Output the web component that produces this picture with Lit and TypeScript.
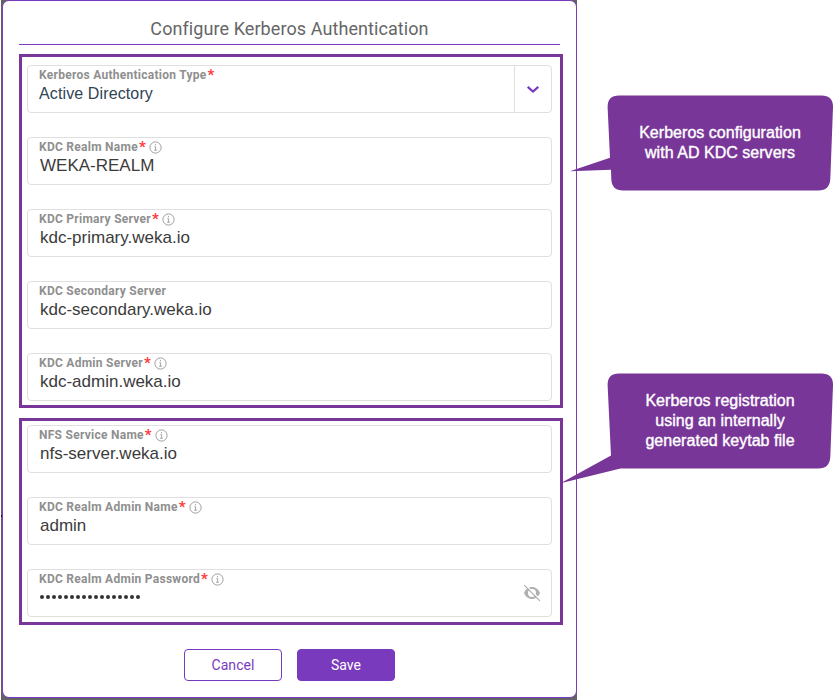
import { LitElement, html, css, svg, nothing } from "lit";
import { customElement, property } from "lit/decorators.js";

const infoIcon = html`<svg class="info" width="13" height="13" viewBox="0 0 13 13" fill="none" stroke="#949494">
  <circle cx="6.5" cy="6.5" r="5.6" stroke-width="0.9" />
  <path d="M5.3 5.6H6.6V9.2M5 9.2H8.1" stroke-width="0.8" />
  <path d="M6 3.7H7" stroke-width="1" />
</svg>`;

const eyeOffIcon = html`<svg class="eye" width="18" height="18" viewBox="0 0 18 18">
  <path fill="#b1b1b1" fill-rule="evenodd"
    d="M1 9C2.400 5.400 5.300 3 9 3s6.600 2.400 8 6c-1.400 3.600-4.300 6-8 6S2.400 12.600 1 9ZM9 5a4 4 0 1 0 0 8a4 4 0 1 0 0-8Z" />
  <path stroke="#fff" stroke-width="1.400" d="M2.300 0.700L17.800 16.200" />
  <path stroke="#a9a9a9" stroke-width="1.100" d="M1.200 1.200L16.800 16.800" />
</svg>`;

@customElement("form-field")
class FormField extends LitElement {
  @property() label = "";
  @property() value = "";
  @property({ type: Boolean }) required = false;
  @property({ type: Boolean }) info = false;
  @property() kind = "text";

  static styles = css`
    :host { display: block; }
    .box {
      box-sizing: border-box; height: 48px; display: flex;
      border: 1px solid #e0e0e0; border-radius: 4px; background: #fff;
    }
    .body { flex: 1; padding: 2px 0 0 11px; min-width: 0; }
    .label {
      display: flex; align-items: flex-start; height: 15px;
      font: 700 12px/15px Roboto, sans-serif; letter-spacing: 0.27px;
      color: #8f8f8f; white-space: pre;
    }
    .star { color: #ff3b3b; font: 700 15px/15px Roboto, sans-serif; height: 15px; margin-left: 1px; letter-spacing: 0; }
    .info { margin-left: 3.500px; margin-top: 0.500px; }
    .value {
      font: 17px/20px "Liberation Sans", Arial, sans-serif; color: #3b3b3b;
      padding: 1px 0 0 1px; white-space: pre;
    }
    .select { font-size: 16px; letter-spacing: 0.12px; padding: 1px 0 0; color: #2f4353; }
    .dots { display: flex; gap: 2px; padding: 8px 0 0 1px; }
    .dot { width: 4px; height: 4px; border-radius: 50%; background: #333; }
    .toggle { width: 36px; border-left: 1px solid #e0e0e0; display: flex; align-items: center; justify-content: center; }
    .reveal { width: 38px; display: flex; align-items: center; justify-content: center; }
  `;

  render() {
    const password = this.kind === "password";
    const select = this.kind === "select";
    return html`<div class="box">
      <div class="body">
        <div class="label"><span>${this.label}</span>${this.required ? html`<span class="star">*</span>` : nothing}${this.info ? infoIcon : nothing}</div>
        ${password
          ? html`<div class="dots">${Array.from({ length: 17 }, () => html`<span class="dot"></span>`)}</div>`
          : html`<div class="value ${select ? "select" : ""}">${this.value}</div>`}
      </div>
      ${select
        ? html`<div class="toggle"><svg width="14" height="10" viewBox="0 0 14 10">
            <path d="M1.700 2.900L7 7.600L12.300 2.900" fill="none" stroke="#793abd" stroke-width="2.200" />
          </svg></div>`
        : nothing}
      ${password ? html`<div class="reveal">${eyeOffIcon}</div>` : nothing}
    </div>`;
  }
}

@customElement("app-root")
class AppRoot extends LitElement {
  static styles = css`
    :host { display: block; position: relative; width: 833px; height: 700px; background: #fff; overflow: hidden; }
    .backdrop { box-sizing: border-box; width: 576px; height: 700px; margin-left: 1px; padding: 0 0 2px 1px; background: #636363; }
    .dialog {
      box-sizing: border-box; width: 575px; height: 698px; padding: 0 13px 0 16px;
      border: 1px solid #793abd; border-radius: 7px; background: #fff;
      display: flex; flex-direction: column;
    }
    .title {
      box-sizing: border-box; width: 541px; height: 44px; padding-top: 16px;
      border-bottom: 1px solid #793abd; text-align: center;
      font: 400 18px/24px Roboto, sans-serif; letter-spacing: 0.08px; color: #666;
    }
    .group {
      box-sizing: border-box; width: 544px; border: 3px solid #783698;
      display: flex; flex-direction: column; gap: 24px;
    }
    .kdc { height: 354px; margin-top: 9px; padding: 8px 8px 0 5px; }
    .registration { height: 207px; margin-top: 10px; padding: 4px 8px 0 5px; }
    .actions { display: flex; gap: 15px; margin: 24px 0 0 165px; }
    .button {
      box-sizing: border-box; width: 98px; height: 32px; border: 1px solid #793abd; border-radius: 4px;
      background: #fff; color: #793abd; font: 400 14px/30px Roboto, sans-serif; letter-spacing: 0.05px;
      text-align: center; padding: 0;
    }
    .primary { background: #793abd; color: #fff; }
    .speck { position: absolute; left: 1px; top: 515px; width: 1px; height: 2px; background: #191330; }
    .shapes { position: absolute; left: 0; top: 0; }
    .callout {
      position: absolute; left: 610px; width: 220px; height: 95px;
      display: flex; align-items: center; justify-content: center; text-align: center;
      font: 16px/20px "Liberation Sans", Arial, sans-serif; color: #fff; letter-spacing: 0.03px;
      -webkit-text-stroke: 0.4px #fff; white-space: pre;
    }
    .first { top: 95px; }
    .second { top: 373px; }
  `;

  render() {
    return html`
      <div class="backdrop">
        <div class="dialog">
          <div class="title">Configure Kerberos Authentication</div>
          <div class="group kdc">
            <form-field kind="select" label="Kerberos Authentication Type" value="Active Directory" required></form-field>
            <form-field label="KDC Realm Name" value="WEKA-REALM" required info></form-field>
            <form-field label="KDC Primary Server" value="kdc-primary.weka.io" required info></form-field>
            <form-field label="KDC Secondary Server" value="kdc-secondary.weka.io"></form-field>
            <form-field label="KDC Admin Server" value="kdc-admin.weka.io" required info></form-field>
          </div>
          <div class="group registration">
            <form-field label="NFS Service Name" value="nfs-server.weka.io" required info></form-field>
            <form-field label="KDC Realm Admin Name" value="admin" required info></form-field>
            <form-field kind="password" label="KDC Realm Admin Password" required info></form-field>
          </div>
          <div class="actions">
            <button class="button">Cancel</button>
            <button class="button primary">Save</button>
          </div>
        </div>
      </div>
      <div class="speck"></div>
      <svg class="shapes" width="833" height="700" fill="#783698">
        ${svg`
          <path d="M619 95.500H821.500Q833.300 95.500 833 107.500L830.300 179Q829.500 190.500 818.500 190.500H623Q611.800 190.500 611.300 179L611 169.800L570 171.200L610 157.800L607.600 107Q607.500 95.500 619 95.500Z" />
          <path d="M619 373.500H821.500Q833.300 373.500 833 385.500L830.300 457Q829.500 468.500 818.500 468.500H620.500L560.500 483.200L611 455.500L607.600 385Q607.500 373.500 619 373.500Z" />
        `}
      </svg>
      <div class="callout first">Kerberos configuration
with AD KDC servers</div>
      <div class="callout second">Kerberos registration
using an internally
generated keytab file</div>
    `;
  }
}
